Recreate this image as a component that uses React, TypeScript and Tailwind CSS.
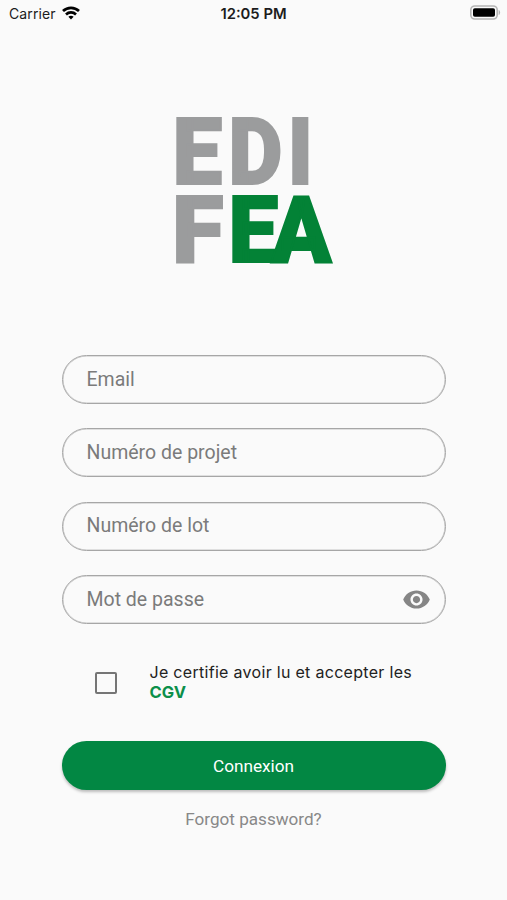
import { useState } from "react";

interface Field {
  name: string;
  label: string;
  type: string;
}

const fields: Field[] = [
  { name: "email", label: "Email", type: "text" },
  { name: "project", label: "Numéro de projet", type: "text" },
  { name: "lot", label: "Numéro de lot", type: "text" },
  { name: "password", label: "Mot de passe", type: "password" },
];

function StatusBar() {
  return (
    <div className="grid h-7 grid-cols-3 items-center pl-[9px] pr-[6px] font-['Inter',sans-serif] text-[14px] text-[#1c1c1c]">
      <div className="-mt-[2px] flex items-center gap-[6px]">
        <span className="tracking-[0.1px]">Carrier</span>
        <svg width="18" height="14" viewBox="0 0 18 14" fill="none" stroke="#000" strokeWidth="2.7">
          <path d="M1 5C5.5 0.7 12.5 0.7 17 5" />
          <path d="M4 8.400C6.8 5.800 11.2 5.800 14 8.400" />
          <path d="M6.4 10.8C7.8 9.500 10.2 9.500 11.6 10.8L9 13.4Z" fill="#000" stroke="none" />
        </svg>
      </div>
      <span className="-ml-[3px] text-center text-[14.800px] font-semibold">12:05 PM</span>
      <svg className="-mt-[3px] justify-self-end" width="31" height="15" viewBox="0 0 31 15">
        <rect x="0.8" y="1" width="26.4" height="13" rx="4" fill="#fafafa" stroke="#b5b5b5" strokeWidth="1.6" />
        <rect x="3" y="3.2" width="22" height="8.6" rx="1.8" fill="#000" />
        <path d="M28.6 5v5c2-.6 2-4.400 0-5z" fill="#b5b5b5" />
      </svg>
    </div>
  );
}

function Logo() {
  return (
    <svg
      className="mx-auto block overflow-visible font-['Roboto',sans-serif] font-black"
      width="160"
      height="150"
      viewBox="0 0 160 150"
      fontSize="92.5"
      strokeWidth="2"
    >
      <g fill="#9b9c9d" stroke="#9b9c9d">
        <text transform="translate(-1.6 69) scale(0.96 1)">E</text>
        <text transform="translate(54.600 69) scale(0.9 1)">D</text>
        <text transform="translate(113.700 69) scale(0.9 1)">I</text>
        <text transform="translate(-1.900 147) scale(1.02 1)">F</text>
      </g>
      <g fill="#038236" stroke="#038236">
        <text transform="translate(54.400 147) scale(0.96 1)">E</text>
        <text transform="translate(97.200 147) scale(0.955 1)">A</text>
      </g>
    </svg>
  );
}

export default function App() {
  const [showPassword, setShowPassword] = useState(false);
  const [accepted, setAccepted] = useState(false);

  return (
    <div className="h-[900px] w-full overflow-hidden bg-[#fafafa] font-['Roboto',sans-serif]">
      <StatusBar />

      <div className="mt-[87px]">
        <Logo />
      </div>

      <form className="mx-auto mt-[90px] w-[384px]" onSubmit={(e) => e.preventDefault()}>
        {/* Fields */}
        <div className="flex flex-col gap-[24.300px]">
          {fields.map((f) => (
            <div
              key={f.name}
              className="flex h-[49px] items-center rounded-full border border-[#a6a6a6] pl-6 pr-[14px] shadow-[inset_0_0_0_0.500px_#c4c4c4]"
            >
              <input
                name={f.name}
                type={f.type === "password" && showPassword ? "text" : f.type}
                placeholder={f.label}
                className="min-w-0 flex-1 bg-transparent text-[19.500px] text-[#222] outline-none placeholder:text-[#7b7b7b]"
              />
              {f.type === "password" && (
                <button type="button" aria-label="Afficher" onClick={() => setShowPassword(!showPassword)}>
                  <svg width="29" height="29" viewBox="0 0 24 24" fill="#858585">
                    <path d="M12 4.500C7 4.500 2.730 7.610 1 12c1.730 4.390 6 7.500 11 7.500s9.270-3.110 11-7.500c-1.730-4.390-6-7.500-11-7.500zM12 17c-2.760 0-5-2.240-5-5s2.240-5 5-5 5 2.240 5 5-2.240 5-5 5zm0-8c-1.660 0-3 1.340-3 3s1.340 3 3 3 3-1.340 3-3-1.340-3-3-3z" />
                  </svg>
                </button>
              )}
            </div>
          ))}
        </div>

        {/* Terms */}
        <div className="mt-[38px] flex items-center pl-[33px]">
          <button
            type="button"
            role="checkbox"
            aria-checked={accepted}
            aria-label="CGV"
            onClick={() => setAccepted(!accepted)}
            className={`mt-px size-[22px] rounded-[2px] border-2 border-[#757575] ${accepted ? "bg-[#028743]" : ""}`}
          />
          <p className="ml-[33px] font-['Inter',sans-serif] text-[16px] leading-[20.500px] tracking-[0.3px] text-[#222]">
            Je certifie avoir lu et accepter les
            <br />
            <span className="text-[16.500px] font-bold tracking-normal text-[#0b8f4a]">CGV</span>
          </p>
        </div>

        <button
          type="submit"
          className="mt-[38px] h-[49px] w-full rounded-full bg-[#028743] pt-[3px] text-[17.200px] text-white shadow-[0_2px_3px_rgba(0,0,0,0.25)]"
        >
          Connexion
        </button>
        <button type="button" className="mx-auto mt-[17px] block text-[17.100px] text-[#888]">
          Forgot password?
        </button>
      </form>
    </div>
  );
}
